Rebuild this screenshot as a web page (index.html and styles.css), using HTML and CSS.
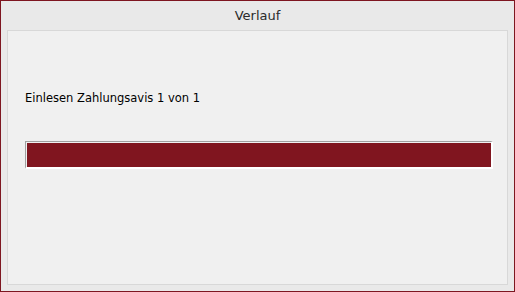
FILE: index.html
```html
<!DOCTYPE html>
<html lang="de">
<head>
<meta charset="utf-8">
<title>Verlauf</title>
<link rel="stylesheet" href="styles.css">
</head>
<body>
<div class="window">
  <div class="titlebar">Verlauf</div>
  <div class="panel">
    <div class="label">Einlesen Zahlungsavis 1 von 1</div>
    <div class="progress">
      <div class="fill" style="width: 100%"></div>
    </div>
  </div>
</div>
</body>
</html>
```
FILE: styles.css
```css
html, body {
  margin: 0;
  padding: 0;
  background: #e9e9e9;
}
.window {
  box-sizing: border-box;
  width: 515px;
  height: 292px;
  border: 1px solid #7e1620;
  background: #e9e9e9;
  padding: 0 6px 6px 6px;
  display: flex;
  flex-direction: column;
  font-family: "DejaVu Sans", sans-serif;
}
.titlebar {
  height: 29px;
  display: flex;
  align-items: center;
  justify-content: center;
  font-size: 13px;
  color: #2b2b2b;
}
.panel {
  flex: 1;
  border: 1px solid #d8d8d8;
  background: #f0f0f0;
  padding: 0 14px 0 17px;
}
.label {
  margin-top: 60px;
  font-size: 11.5px;
  line-height: 14px;
  color: #000;
}
.progress {
  margin-top: 36px;
  height: 24px;
  border-top: 1px solid #a0a0a0;
  border-left: 1px solid #a0a0a0;
  border-right: 2px solid #ffffff;
  border-bottom: 2px solid #ffffff;
  padding: 1px 0 0 1px;
  background: #f0f0f0;
  display: flex;
}
.fill {
  height: 100%;
  background: #80151f;
}
```
